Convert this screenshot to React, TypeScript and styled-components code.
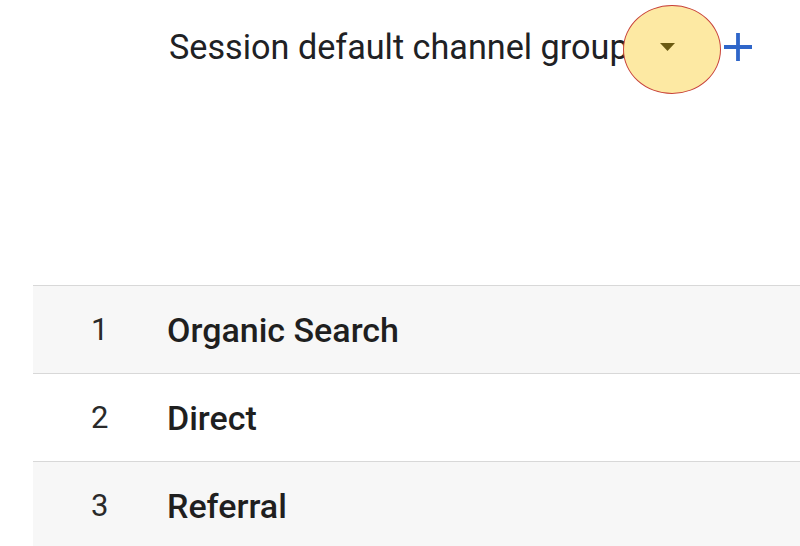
import React from "react";
import styled, { createGlobalStyle } from "styled-components";

const Global = createGlobalStyle`
  html, body { margin: 0; padding: 0; background: #ffffff; }
  body { font-family: Roboto, "Liberation Sans", Arial, sans-serif; color: #1f1f1f; }
`;

const Page = styled.div`
  width: 800px;
  height: 546px;
  overflow: hidden;
  display: flex;
  flex-direction: column;
`;

const Header = styled.div`
  flex-shrink: 0;
  display: flex;
  align-items: center;
  height: 98px;
  padding-left: 169px;
  box-sizing: border-box;
`;

const Title = styled.span`
  font-size: 34.2px;
  font-weight: 400;
  color: #202124;
  white-space: nowrap;
  margin-bottom: 4px;
`;

const DropButton = styled.div`
  flex-shrink: 0;
  width: 98px;
  height: 89px;
  margin-left: -6px;
  border-radius: 50%;
  background: #fde9a3;
  border: 1.5px solid #c8423a;
  display: flex;
  align-items: center;
  justify-content: center;
  padding-right: 8px;
  padding-bottom: 4px;
  box-sizing: border-box;
  position: relative;
  z-index: 1;
`;

const PlusIcon = styled.svg`
  flex-shrink: 0;
  margin-left: 2px;
  margin-bottom: 4px;
`;

const Table = styled.div`
  flex-shrink: 0;
  margin-top: 187px;
  margin-left: 33px;
  display: flex;
  flex-direction: column;
`;

const Row = styled.div<{ $shaded: boolean }>`
  flex-shrink: 0;
  display: flex;
  align-items: center;
  height: 88px;
  box-sizing: border-box;
  border-top: 1.5px solid #d8d8d8;
  background: ${(p) => (p.$shaded ? "#f7f7f7" : "#ffffff")};
`;

const Num = styled.span`
  width: 134px;
  padding-left: 58px;
  box-sizing: border-box;
  font-size: 31px;
  font-weight: 400;
  color: #2a2a2a;
`;

const Label = styled.span`
  font-size: 34px;
  font-weight: 500;
  color: #1f1f1f;
`;

const rows = ["Organic Search", "Direct", "Referral"];

export default function App() {
  return (
    <Page>
      <Global />
      <Header>
        <Title>Session default channel group</Title>
        <DropButton>
          <svg width="15" height="8" viewBox="0 0 15 8">
            <path d="M0 0 L15 0 L7.5 8 Z" fill="#6b5a12" />
          </svg>
        </DropButton>
        <PlusIcon width="30" height="30" viewBox="0 0 30 30">
          <path d="M15 1 V29 M1 15 H29" stroke="#2f66c9" strokeWidth="3.8" fill="none" />
        </PlusIcon>
      </Header>
      <Table>
        {rows.map((r, i) => (
          <Row key={r} $shaded={i % 2 === 0}>
            <Num>{i + 1}</Num>
            <Label>{r}</Label>
          </Row>
        ))}
      </Table>
    </Page>
  );
}
